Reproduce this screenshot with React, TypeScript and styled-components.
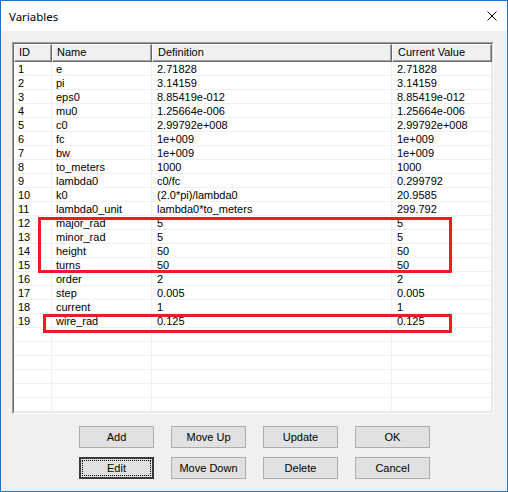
import React from "react";
import styled, { createGlobalStyle } from "styled-components";

const Global = createGlobalStyle`
  html, body { margin: 0; padding: 0; background: #fff; }
  * { box-sizing: border-box; }
`;

const Window = styled.div`
  width: 508px;
  height: 492px;
  border: 1px solid #1c75c8;
  background: #f0f0f0;
  display: flex;
  flex-direction: column;
  font-family: "Liberation Sans", Arial, sans-serif;
  font-size: 11px;
  color: #000;
`;

const TitleBar = styled.div`
  height: 30px;
  background: #fff;
  display: flex;
  align-items: center;
  justify-content: space-between;
  padding: 0 9px 0 8px;
`;

const Title = styled.span`
  font-family: "Segoe UI", "Noto Sans", sans-serif;
  font-size: 11.5px;
  color: #000;
`;

const CloseIcon = styled.svg`
  width: 10px;
  height: 10px;
  margin-right: 1px;
`;

const Body = styled.div`
  flex: 1;
  display: flex;
  flex-direction: column;
  padding: 11px 13px 0 11px;
`;

const ListBox = styled.div`
  position: relative;
  width: 482px;
  height: 372px;
  border-top: 1px solid #a0a0a0;
  border-left: 1px solid #a0a0a0;
  border-right: 1px solid #fff;
  border-bottom: 1px solid #fff;
`;

const ListInner = styled.div`
  height: 100%;
  background: #fff;
  border-top: 1px solid #696969;
  border-left: 1px solid #696969;
  border-right: 1px solid #e3e3e3;
  border-bottom: 1px solid #e3e3e3;
  overflow: hidden;
`;

const Grid = styled.div`
  display: grid;
  grid-template-columns: 38px 100px 240px 100px;
  grid-auto-rows: 14px;
  grid-template-rows: 18px;
`;

const HeaderCell = styled.div<{ $pad: number }>`
  height: 18px;
  background: #f0f0f0;
  border-top: 1px solid #fff;
  border-left: 1px solid #fff;
  border-right: 1px solid #696969;
  border-bottom: 1px solid #696969;
  box-shadow: inset -1px -1px 0 #a0a0a0;
  padding-left: ${(p) => p.$pad - 1}px;
  line-height: 15px;
  white-space: nowrap;
`;

const Cell = styled.div<{ $pad: number }>`
  height: 14px;
  border-right: 1px solid #f0f0f0;
  border-bottom: 1px solid #f0f0f0;
  padding-left: ${(p) => p.$pad}px;
  padding-top: 1px;
  line-height: 13px;
  white-space: nowrap;
  overflow: hidden;
`;

const Highlight = styled.div<{ $l: number; $t: number; $w: number; $h: number }>`
  position: absolute;
  left: ${(p) => p.$l}px;
  top: ${(p) => p.$t}px;
  width: ${(p) => p.$w}px;
  height: ${(p) => p.$h}px;
  border: 3px solid #ed1c24;
  pointer-events: none;
`;

const ButtonGrid = styled.div`
  display: grid;
  grid-template-columns: repeat(4, 75px);
  grid-auto-rows: 22px;
  column-gap: 17px;
  row-gap: 9px;
  margin-top: 12px;
  padding-left: 67px;
`;

const Button = styled.button<{ $default?: boolean }>`
  height: 22px;
  background: #e1e1e1;
  border: ${(p) => (p.$default ? "2px solid #3a3a3a" : "1px solid #adadad")};
  font-family: "Liberation Sans", Arial, sans-serif;
  font-size: 11px;
  color: #000;
  padding: 0;
  outline: ${(p) => (p.$default ? "1px dotted #000" : "none")};
  outline-offset: -4px;
`;

const columns = [
  { title: "ID", pad: 4 },
  { title: "Name", pad: 4 },
  { title: "Definition", pad: 5 },
  { title: "Current Value", pad: 5 },
];

const rows: [string, string, string][] = [
  ["e", "2.71828", "2.71828"],
  ["pi", "3.14159", "3.14159"],
  ["eps0", "8.85419e-012", "8.85419e-012"],
  ["mu0", "1.25664e-006", "1.25664e-006"],
  ["c0", "2.99792e+008", "2.99792e+008"],
  ["fc", "1e+009", "1e+009"],
  ["bw", "1e+009", "1e+009"],
  ["to_meters", "1000", "1000"],
  ["lambda0", "c0/fc", "0.299792"],
  ["k0", "(2.0*pi)/lambda0", "20.9585"],
  ["lambda0_unit", "lambda0*to_meters", "299.792"],
  ["major_rad", "5", "5"],
  ["minor_rad", "5", "5"],
  ["height", "50", "50"],
  ["turns", "50", "50"],
  ["order", "2", "2"],
  ["step", "0.005", "0.005"],
  ["current", "1", "1"],
  ["wire_rad", "0.125", "0.125"],
];

const TOTAL_ROWS = 25;

export default function App() {
  const cells: React.ReactNode[] = [];
  for (let i = 0; i < TOTAL_ROWS; i++) {
    const r = rows[i];
    const vals = r ? [String(i + 1), r[0], r[1], r[2]] : ["", "", "", ""];
    vals.forEach((v, c) => {
      cells.push(
        <Cell key={`${i}-${c}`} $pad={columns[c].pad}>
          {v}
        </Cell>
      );
    });
  }
  return (
    <>
      <Global />
      <Window>
        <TitleBar>
          <Title>Variables</Title>
          <CloseIcon viewBox="0 0 10 10">
            <path d="M0.5 0.5 L9.5 9.5 M9.5 0.5 L0.5 9.5" stroke="#000" strokeWidth="1" fill="none" />
          </CloseIcon>
        </TitleBar>
        <Body>
          <ListBox>
            <ListInner>
              <Grid>
                {columns.map((c) => (
                  <HeaderCell key={c.title} $pad={c.pad + 1}>
                    {c.title}
                  </HeaderCell>
                ))}
                {cells}
              </Grid>
            </ListInner>
            <Highlight $l={25} $t={174} $w={414} $h={56} />
            <Highlight $l={30} $t={271} $w={409} $h={19} />
          </ListBox>
          <ButtonGrid>
            <Button>Add</Button>
            <Button>Move Up</Button>
            <Button>Update</Button>
            <Button>OK</Button>
            <Button $default>Edit</Button>
            <Button>Move Down</Button>
            <Button>Delete</Button>
            <Button>Cancel</Button>
          </ButtonGrid>
        </Body>
      </Window>
    </>
  );
}
